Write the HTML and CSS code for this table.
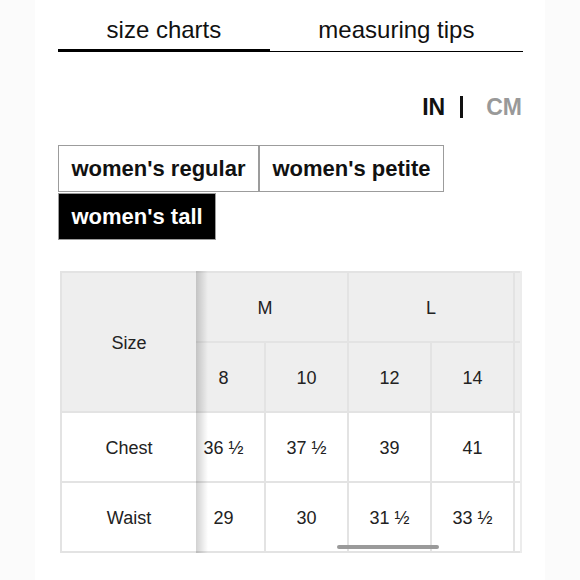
FILE: index.html
```html
<!DOCTYPE html>
<html lang="en">
<head>
<meta charset="utf-8">
<title>Size charts</title>
<link rel="stylesheet" href="styles.css">
</head>
<body>
<div class="page">
  <nav class="tabs">
    <div class="tab active">size charts</div>
    <div class="tab">measuring tips</div>
  </nav>

  <div class="units">
    <span class="unit on">IN</span>
    <span class="sep"></span>
    <span class="unit off">CM</span>
  </div>

  <div class="fits">
    <div class="fit">women's regular</div><div class="fit">women's petite</div><div class="fit selected">women's tall</div>
  </div>

  <div class="chart">
    <div class="fixed">
      <div class="cell head size">Size</div>
      <div class="cell">Chest</div>
      <div class="cell">Waist</div>
    </div>
    <div class="scroller">
      <div class="grid">
        <div class="cell head span2">M</div>
        <div class="cell head span2">L</div>
        <div class="cell head"></div>
        <div class="cell head">8</div>
        <div class="cell head">10</div>
        <div class="cell head">12</div>
        <div class="cell head">14</div>
        <div class="cell head"></div>
        <div class="cell">36 ½</div>
        <div class="cell">37 ½</div>
        <div class="cell">39</div>
        <div class="cell">41</div>
        <div class="cell"></div>
        <div class="cell">29</div>
        <div class="cell">30</div>
        <div class="cell">31 ½</div>
        <div class="cell">33 ½</div>
        <div class="cell"></div>
      </div>
    </div>
    <div class="thumb"></div>
  </div>
</div>
</body>
</html>
```

FILE: styles.css
```css
html, body {
  margin: 0;
  padding: 0;
  background: #fbfbfb;
}

body {
  font-family: "Liberation Sans", Arial, Helvetica, sans-serif;
  color: #111;
}

.page {
  width: 465px;
  min-height: 580px;
  margin: 0 auto;
  padding: 0 22px 0 23px;
  background: #fff;
  box-sizing: content-box;
}

/* tabs */
.tabs {
  display: flex;
  border-bottom: 1px solid #000;
}

.tab {
  flex: 1 1 auto;
  text-align: center;
  font-size: 24px;
  line-height: 28px;
  padding: 16px 0 5px;
  border-bottom: 3px solid transparent;
  margin-bottom: -1px;
  color: #111;
}

.tab.active {
  border-bottom-color: #000;
}

/* units */
.units {
  display: flex;
  justify-content: flex-end;
  align-items: center;
  margin-top: 42px;
  padding-right: 1px;
  font-size: 23px;
  line-height: 26px;
  font-weight: bold;
}

.unit.on { color: #111; }
.unit.off { color: #999; }

.sep {
  width: 3px;
  height: 22px;
  background: #111;
  margin: 0 23px 0 15px;
}

/* fits */
.fits {
  margin-top: 25px;
  font-size: 0;
}

.fit {
  display: inline-block;
  vertical-align: top;
  font-size: 22px;
  line-height: 25px;
  font-weight: bold;
  padding: 10px 12.5px;
  border: 1px solid #9c9c9c;
  color: #111;
  background: #fff;
}

.fit.selected {
  margin-top: 1px;
  background: #000;
  color: #fff;
}

/* chart */
.chart {
  position: relative;
  display: flex;
  width: 460px;
  margin: 31px 0 0 2px;
  border-right: 2px solid #ececec;
  font-size: 18px;
  color: #222;
}

.cell {
  display: flex;
  align-items: center;
  justify-content: center;
  background: #fff;
  height: 68px;
  padding-top: 2px;
  box-sizing: border-box;
}

.cell.head {
  background: #eeeeee;
}

.fixed {
  position: relative;
  z-index: 1;
  flex: none;
  display: grid;
  grid-template-columns: 134px;
  grid-template-rows: 68px 68px 68px 68px;
  gap: 2px;
  padding: 2px 0 2px 2px;
  background: #e3e3e3;
}

.fixed .size {
  grid-row: span 2;
  height: auto;
}

.fixed::after {
  content: "";
  position: absolute;
  top: 0;
  bottom: 0;
  right: -12px;
  width: 12px;
  background: linear-gradient(to right, rgba(0, 0, 0, 0.18), rgba(0, 0, 0, 0));
}

.scroller {
  flex: 1 1 auto;
  overflow: hidden;
}

.grid {
  display: grid;
  grid-template-columns: repeat(5, 81px);
  grid-auto-rows: 68px;
  gap: 2px;
  padding: 2px 0 2px 2px;
  margin-left: -15px;
  width: max-content;
  background: #e3e3e3;
}

.span2 {
  grid-column: span 2;
}

.thumb {
  position: absolute;
  left: 277px;
  top: 274px;
  width: 102px;
  height: 4px;
  border-radius: 2px;
  background: #9a9a9a;
  z-index: 2;
}
```
